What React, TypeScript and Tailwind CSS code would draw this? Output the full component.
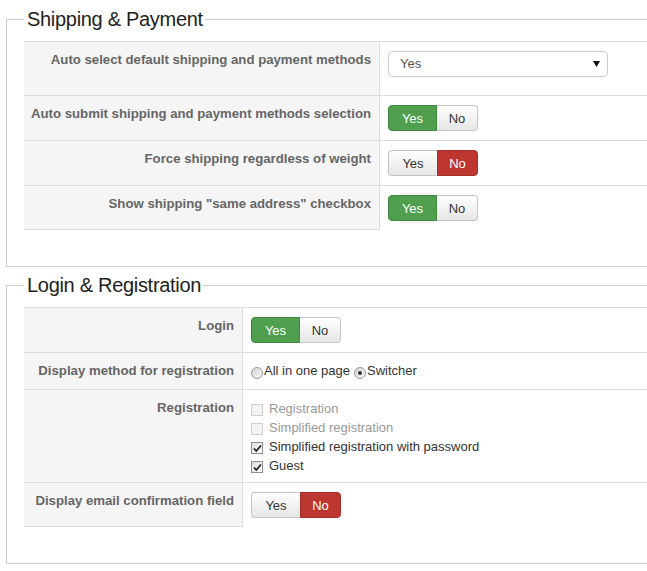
import React from 'react';

type Toggle = 'yes' | 'no';

function YesNo({ value }: { value: Toggle }) {
  const base = 'h-[26px] flex items-center justify-center border text-[13px] leading-none';
  const off = 'bg-gradient-to-b from-[#ffffff] to-[#e6e6e6] border-[#c5c5c5] text-[#333333]';
  return (
    <div className="flex">
      <span
        className={`${base} w-[49px] rounded-l-[4px] ${
          value === 'yes' ? 'bg-[#4f9f4e] border-[#3f8a3f] text-white' : `${off} border-r-0`
        }`}
      >
        Yes
      </span>
      <span
        className={`${base} w-[41px] rounded-r-[4px] ${
          value === 'no' ? 'bg-[#bd362f] border-[#a32d27] text-white' : `${off} border-l-0`
        }`}
      >
        No
      </span>
    </div>
  );
}

function Radio({ checked }: { checked?: boolean }) {
  return (
    <span className="mt-[5px] w-[12px] h-[12px] shrink-0 rounded-full border border-[#9a9a9a] bg-gradient-to-br from-[#d4d4d4] to-[#f7f7f7] flex items-center justify-center">
      {checked && <span className="w-[4px] h-[4px] rounded-full bg-[#333333]" />}
    </span>
  );
}

function Check({ checked, disabled }: { checked?: boolean; disabled?: boolean }) {
  return (
    <span
      className={`mt-[5px] w-[12px] h-[12px] shrink-0 border flex items-center justify-center ${
        disabled
          ? 'border-[#cfcfcf] bg-[#f3f3f3]'
          : 'border-[#8f8f8f] bg-gradient-to-br from-[#dedede] to-[#fafafa]'
      }`}
    >
      {checked && (
        <svg width="9" height="9" viewBox="0 0 9 9">
          <path d="M1 4.5 L3.3 7 L8 1.5" fill="none" stroke="#222" strokeWidth="1.8" />
        </svg>
      )}
    </span>
  );
}

type Row = { label: string; control: React.ReactNode; pad?: string };

function Section({
  title,
  labelWidth,
  rows,
  className = '',
}: {
  title: string;
  labelWidth: string;
  rows: Row[];
  className?: string;
}) {
  return (
    <fieldset className={`ml-[6px] w-[720px] border border-[#cccccc] pl-[17px] pt-[3px] pb-[36px] ${className}`}>
      <legend className="pl-[3px] pr-[2px] h-[38px] leading-[38px] text-[20px] tracking-[-0.3px] text-[#222222]">
        {title}
      </legend>
      <div>
        {rows.map((r, i) => (
          <div key={r.label} className="flex border-t border-[#dddddd]">
            <div
              className={`${labelWidth} shrink-0 bg-[#f5f5f5] border-r border-[#dddddd] pt-[9px] pr-[8px] text-right font-bold text-[13.2px] leading-[18px] text-[#666666] ${
                i === rows.length - 1 ? 'border-b' : ''
              }`}
            >
              {r.label}
            </div>
            <div className={`flex-1 pl-[8px] ${r.pad ?? 'py-[9px]'}`}>{r.control}</div>
          </div>
        ))}
      </div>
    </fieldset>
  );
}

export default function App() {
  const shipping: Row[] = [
    {
      label: 'Auto select default shipping and payment methods',
      pad: 'pt-[9px] pb-[18px]',
      control: (
        <div className="w-[220px] h-[26px] border border-[#cccccc] rounded-[4px] bg-white flex items-center justify-between pl-[11px] pr-[7px] text-[13px] text-[#555555]">
          <span>Yes</span>
          <svg width="7" height="6" viewBox="0 0 7 6">
            <path d="M0 0 H7 L3.5 6 Z" fill="#111" />
          </svg>
        </div>
      ),
    },
    { label: 'Auto submit shipping and payment methods selection', control: <YesNo value="yes" /> },
    { label: 'Force shipping regardless of weight', control: <YesNo value="no" /> },
    { label: 'Show shipping "same address" checkbox', control: <YesNo value="yes" /> },
  ];

  const login: Row[] = [
    { label: 'Login', control: <YesNo value="yes" /> },
    {
      label: 'Display method for registration',
      control: (
        <div className="flex items-start text-[13px] leading-[18px] text-[#333333]">
          <Radio />
          <span className="ml-[1px]">All in one page</span>
          <span className="ml-[4px]"><Radio checked /></span>
          <span className="ml-[1px]">Switcher</span>
        </div>
      ),
    },
    {
      label: 'Registration',
      pad: 'pt-[9px] pb-[7px]',
      control: (
        <div className="flex flex-col text-[13px] leading-[19px]">
          {[
            { t: 'Registration', c: false, d: true },
            { t: 'Simplified registration', c: false, d: true },
            { t: 'Simplified registration with password', c: true, d: false },
            { t: 'Guest', c: true, d: false },
          ].map((o) => (
            <div key={o.t} className="flex items-start h-[19px]">
              <Check checked={o.c} disabled={o.d} />
              <span className={`ml-[6px] ${o.d ? 'text-[#999999]' : 'text-[#333333]'}`}>{o.t}</span>
            </div>
          ))}
        </div>
      ),
    },
    { label: 'Display email confirmation field', control: <YesNo value="no" /> },
  ];

  return (
    <div className="w-[647px] h-[571px] overflow-hidden bg-white font-['Liberation_Sans',Arial,sans-serif]">
      <Section title="Shipping & Payment" labelWidth="w-[356px]" rows={shipping} />
      <Section title="Login & Registration" labelWidth="w-[219px]" rows={login} className="-mt-px" />
    </div>
  );
}
